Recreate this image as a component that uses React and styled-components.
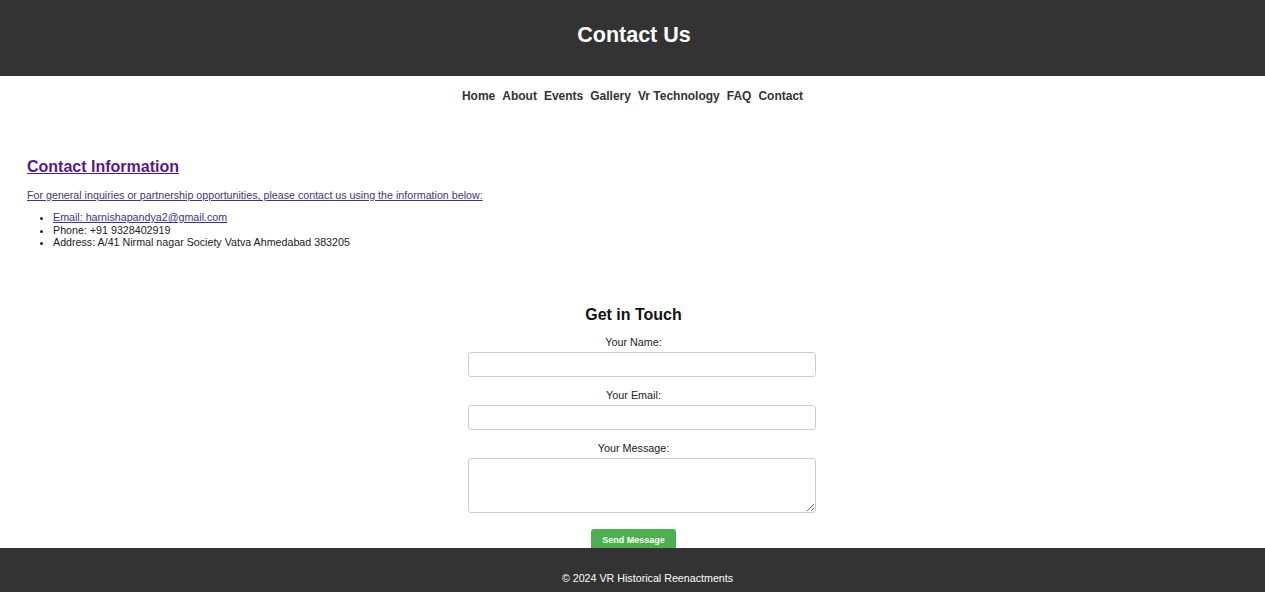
import styled, { createGlobalStyle } from 'styled-components';

const GlobalStyle = createGlobalStyle`
  body {
    margin: 0;
    background: #fff;
    font-family: "Liberation Sans", Arial, sans-serif;
    color: #222;
  }
`;

const navItems = ['Home', 'About', 'Events', 'Gallery', 'Vr Technology', 'FAQ', 'Contact'];

function App() {
  return (
    <>
      <GlobalStyle />
      <Header>
        <h1>Contact Us</h1>
      </Header>
      <Nav>
        {navItems.map((item) => (
          <NavLink key={item} href="#">
            {item}
          </NavLink>
        ))}
      </Nav>

      <InfoSection>
        <InfoTitle href="#">Contact Information</InfoTitle>
        <InfoText href="#">
          For general inquiries or partnership opportunities, please contact us using the
          information below:
        </InfoText>
        <InfoList>
          <li>
            <EmailLink href="#">Email: harnishapandya2@gmail.com</EmailLink>
          </li>
          <li>Phone: +91 9328402919</li>
          <li>Address: A/41 Nirmal nagar Society Vatva Ahmedabad 383205</li>
        </InfoList>
      </InfoSection>

      <FormSection>
        <FormTitle>Get in Touch</FormTitle>
        <Form>
          <Label htmlFor="name">Your Name:</Label>
          <Input id="name" type="text" />
          <Label htmlFor="email">Your Email:</Label>
          <Input id="email" type="email" />
          <Label htmlFor="message">Your Message:</Label>
          <TextArea id="message" />
          <SendButton type="submit">Send Message</SendButton>
        </Form>
      </FormSection>

      <Footer>
        <p>© 2024 VR Historical Reenactments</p>
      </Footer>
    </>
  );
}

const Header = styled.header`
  display: flex;
  align-items: center;
  justify-content: center;
  height: 76px;
  padding: 0 0 6px 3px;
  box-sizing: border-box;
  background: #333;

  h1 {
    margin: 0;
    color: #fff;
    font-size: 21.5px;
    font-weight: bold;
  }
`;

const Nav = styled.nav`
  display: flex;
  justify-content: center;
  align-items: center;
  gap: 7px;
  height: 40px;
`;

const NavLink = styled.a`
  color: #333;
  font-size: 12px;
  font-weight: bold;
  text-decoration: none;
`;

const InfoSection = styled.section`
  display: flex;
  flex-direction: column;
  align-items: flex-start;
  padding: 41px 27px 0;
`;

const InfoTitle = styled.a`
  color: #551a8b;
  font-size: 16px;
  font-weight: bold;
  line-height: 20px;
`;

const InfoText = styled.a`
  margin-top: 12px;
  color: #4a3472;
  font-size: 10.7px;
  line-height: 13px;
`;

const InfoList = styled.ul`
  margin: 9px 0 0;
  padding-left: 26px;
  font-size: 10.7px;
  line-height: 12.5px;
  color: #222;
`;

const EmailLink = styled.a`
  color: #3f2f8a;
`;

const FormSection = styled.section`
  display: flex;
  flex-direction: column;
  align-items: center;
  margin-top: 57px;
  padding-bottom: 60px;
`;

const FormTitle = styled.h2`
  margin: 0 0 0 2px;
  font-size: 16px;
  line-height: 18px;
  color: #111;
`;

const Form = styled.form`
  display: flex;
  flex-direction: column;
  align-items: center;
  width: 332px;
  margin: 12px 0 0 2px;
`;

const Label = styled.label`
  font-size: 10.8px;
  line-height: 13px;
  color: #222;
  margin-bottom: 3px;
`;

const Input = styled.input`
  width: 100%;
  height: 9px;
  padding: 7px;
  margin: 0 0 12px 16px;
  border: 1px solid #ccc;
  border-radius: 3px;
  font-size: 11px;
  box-sizing: content-box;
`;

const TextArea = styled.textarea`
  width: 100%;
  height: 39px;
  padding: 7px;
  margin: 0 0 16px 16px;
  border: 1px solid #ccc;
  border-radius: 3px;
  font-size: 11px;
  font-family: inherit;
  box-sizing: content-box;
`;

const SendButton = styled.button`
  width: 85px;
  height: 23px;
  border: none;
  border-radius: 3px;
  background: #4caf50;
  color: #fff;
  font-family: inherit;
  font-size: 9px;
  font-weight: bold;
`;

const Footer = styled.footer`
  position: fixed;
  left: 0;
  right: 0;
  bottom: 0;
  height: 44px;
  padding: 24px 0 0 30px;
  box-sizing: border-box;
  background: #333;
  text-align: center;

  p {
    margin: 0;
    color: #fff;
    font-size: 10.7px;
    line-height: 13px;
  }
`;

export default App;
